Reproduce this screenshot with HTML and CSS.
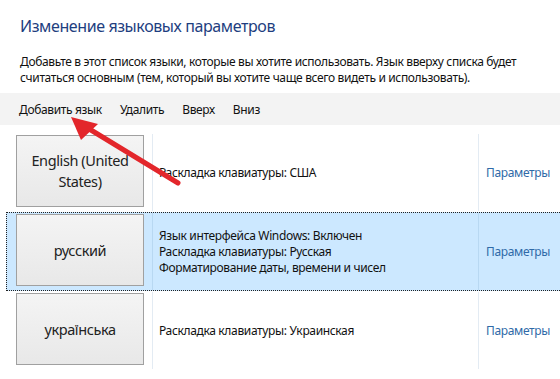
FILE: index.html
```html
<!DOCTYPE html>
<html lang="ru">
<head>
<meta charset="utf-8">
<link rel="stylesheet" href="styles.css">
</head>
<body>
<div class="page">
  <header class="head">
    <h1 class="title">Изменение языковых параметров</h1>
    <p class="desc">Добавьте в этот список языки, которые вы хотите использовать. Язык вверху списка будет считаться основным (тем, который вы хотите чаще всего видеть и использовать).</p>
  </header>
  <nav class="toolbar">
    <span class="tool">Добавить язык</span>
    <span class="tool">Удалить</span>
    <span class="tool">Вверх</span>
    <span class="tool">Вниз</span>
  </nav>
  <div class="list">
    <div class="row">
      <div class="cell-btn"><div class="langbtn">English (United States)</div></div>
      <div class="cell-info"><div>Раскладка клавиатуры: США</div></div>
      <div class="cell-link"><span class="link">Параметры</span></div>
    </div>
    <div class="row selected">
      <div class="cell-btn"><div class="langbtn">русский</div></div>
      <div class="cell-info"><div>Язык интерфейса Windows: Включен<br>Раскладка клавиатуры: Русская<br>Форматирование даты, времени и чисел</div></div>
      <div class="cell-link"><span class="link">Параметры</span></div>
    </div>
    <div class="row">
      <div class="cell-btn"><div class="langbtn">українська</div></div>
      <div class="cell-info"><div>Раскладка клавиатуры: Украинская</div></div>
      <div class="cell-link"><span class="link">Параметры</span></div>
    </div>
  </div>
  <svg class="arrow" width="560" height="379" viewBox="0 0 560 379">
    <line x1="178" y1="183" x2="86" y2="127" stroke="#e3262b" stroke-width="5" stroke-linecap="round"/>
    <polygon points="71,117 98,124 81,140" fill="#e3262b"/>
  </svg>
</div>
</body>
</html>
```
FILE: styles.css
```css
* { box-sizing: border-box; }
html, body { margin: 0; padding: 0; background: #fff; }
body {
  font-family: "Segoe UI", "Noto Sans", sans-serif;
  color: #111;
  width: 560px;
  height: 379px;
  overflow: hidden;
  letter-spacing: -0.35px;
}
.page { position: relative; height: 379px; }
.head { padding: 15px 20px 0 20px; }
.title {
  margin: 0;
  font-size: 16px;
  font-weight: normal;
  line-height: 22px;
  color: #1e3e80;
  letter-spacing: -0.4px;
}
.desc {
  margin: 17px 0 0 0;
  font-size: 12px;
  line-height: 16px;
}
.toolbar {
  margin-top: 7px;
  height: 32px;
  background: #f3f3f3;
  display: flex;
  align-items: center;
  padding-left: 10px;
  font-size: 12px;
}
.tool { padding: 0 9px; }
.list { margin-top: 8px; }
.row {
  display: grid;
  grid-template-columns: 145px 326px 1fr;
  height: 79px;
  margin-left: 6px;
  border: 1px solid transparent;
  border-right: none;
}
.row.selected {
  background: #cce8ff;
  border: 1px dotted #222;
  border-right: none;
}
.cell-btn { padding: 1px 0 0 9px; }
.langbtn {
  width: 128px;
  height: 72px;
  border: 1px solid #a0a0a0;
  background: linear-gradient(#f4f4f4, #e8e8e8);
  display: flex;
  align-items: center;
  justify-content: center;
  text-align: center;
  font-size: 14.5px;
  line-height: 21px;
  padding: 0 8px;
  color: #222;
  letter-spacing: -0.4px;
}
.cell-info {
  border-left: 1px solid #e3ebf3;
  padding-left: 6px;
  display: flex;
  align-items: center;
  font-size: 12px;
  line-height: 16px;
}
.row.selected .cell-info, .row.selected .cell-link { border-left-color: #b8d8f2; }
.cell-link {
  border-left: 1px solid #e3ebf3;
  padding-left: 7px;
  display: flex;
  align-items: center;
  font-size: 12px;
}
.link { color: #2f6aa8; }
.arrow { position: absolute; left: 0; top: 0; pointer-events: none; }
```
